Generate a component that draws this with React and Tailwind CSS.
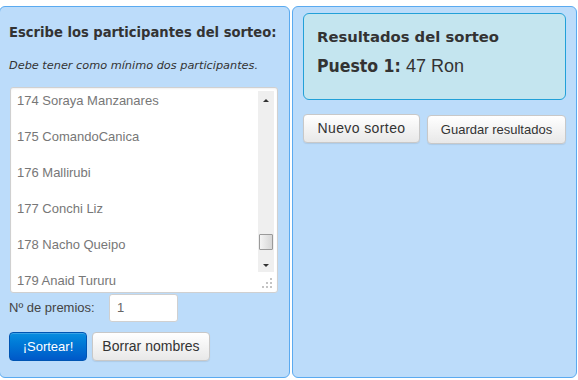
const participantes = [
  "174 Soraya Manzanares",
  "175 ComandoCanica",
  "176 Mallirubi",
  "177 Conchi Liz",
  "178 Nacho Queipo",
  "179 Anaid Tururu",
];

function Boton({ children, primary, ancho }) {
  return (
    <button
      className={
        (primary
          ? "h-[29px] rounded-[4px] border border-[#0055b3] bg-gradient-to-b from-[#0a8ee0] to-[#0058c8] text-[13px] text-white shadow-[inset_0_1px_0_rgba(255,255,255,0.2)] "
          : "h-[29px] rounded-[4px] border border-[#c8c8c8] bg-gradient-to-b from-white to-[#e8e8e8] text-[13px] text-[#333] shadow-[0_1px_1px_rgba(0,0,0,0.08)] ") +
        ancho
      }
    >
      {children}
    </button>
  );
}

function Scrollbar() {
  return (
    <div className="absolute right-[3px] top-[3px] flex h-[181px] w-[16px] flex-col items-center bg-[#efefef]">
      <div className="flex h-[18px] w-full items-center justify-center">
        <div className="h-0 w-0 border-x-[3px] border-b-[3px] border-x-transparent border-b-[#333]" />
      </div>
      <div className="flex-1" />
      <div className="mb-[8px] h-[16px] w-[14px] rounded-[1px] border border-[#9a9a9a] bg-gradient-to-r from-[#f4f4f4] to-[#d6d6d6]" />
      <div className="flex h-[14px] w-full items-center justify-center">
        <div className="h-0 w-0 border-x-[3px] border-t-[3px] border-x-transparent border-t-[#333]" />
      </div>
    </div>
  );
}

function Grip() {
  return (
    <div className="absolute bottom-[4px] right-[5px] grid grid-cols-3 gap-[2px]">
      {[0, 0, 1, 0, 1, 1, 1, 1, 1].map((v, i) => (
        <div key={i} className={v ? "h-[2px] w-[2px] bg-[#c4c4c4]" : "h-[2px] w-[2px]"} />
      ))}
    </div>
  );
}

export default function App() {
  return (
    <div className="flex h-[380px] w-[578px] gap-[2px] bg-white pt-[6px] font-['Liberation_Sans',Arial,sans-serif]">
      <div className="-ml-px flex h-[372px] w-[291px] flex-col rounded-[6px] border border-[#5aaaf0] bg-[#bcdcfa] px-[9px]">
        <h2 className="mt-[15px] whitespace-nowrap font-['DejaVu_Sans_Condensed','DejaVu_Sans',sans-serif] font-stretch-condensed text-[14.6px] font-bold leading-[20px] text-[#333]">
          Escribe los participantes del sorteo:
        </h2>
        <p className="mt-[17px] whitespace-nowrap font-['DejaVu_Sans',sans-serif] text-[11.3px] italic leading-[14px] text-[#333]">
          Debe tener como mínimo dos participantes.
        </p>
        <div className="relative ml-px mt-[14px] h-[206px] w-[268px] overflow-hidden rounded-[3px] border border-[#d0d0d0] bg-white shadow-[inset_0_1px_2px_rgba(0,0,0,0.06)]">
          <div className="pl-[6px] pt-[4px] text-[13px] leading-[18px] text-[#777]">
            {participantes.map((p) => (
              <div key={p} className="mb-[18px]">
                {p}
              </div>
            ))}
          </div>
          <Scrollbar />
          <Grip />
        </div>
        <div className="mt-[1px] flex items-center">
          <span className="w-[100px] text-[13px] text-[#444]">Nº de premios:</span>
          <div className="flex h-[28px] w-[69px] items-center rounded-[3px] border border-[#d0d0d0] bg-white pl-[7px] text-[13px] text-[#666]">
            1
          </div>
        </div>
        <div className="mt-[10px] flex gap-[5px]">
          <Boton primary ancho="w-[78px]">¡Sortear!</Boton>
          <Boton ancho="w-[118px] text-[14px]">Borrar nombres</Boton>
        </div>
      </div>

      <div className="flex h-[372px] w-[285px] flex-col rounded-[6px] border border-[#5aaaf0] bg-[#bcdcfa] px-[10px] pt-[6px]">
        <div className="h-[87px] rounded-[6px] border border-[#22a0d8] bg-[#c4e5ef] pl-[13px] pt-[13px] text-[#333]">
          <h2 className="font-['DejaVu_Sans',sans-serif] text-[14.8px] font-bold leading-[20px]">
            Resultados del sorteo
          </h2>
          <p className="mt-[8px] text-[18px] leading-[22px]">
            <span className="font-['DejaVu_Sans_Condensed','DejaVu_Sans',sans-serif] font-stretch-condensed text-[17.5px] font-bold">
              Puesto 1:
            </span>{" "}
            47 Ron
          </p>
        </div>
        <div className="mt-[14px] flex items-start gap-[7px]">
          <Boton ancho="w-[117px] text-[14px] tracking-[0.4px]">Nuevo sorteo</Boton>
          <Boton ancho="mt-[1px] w-[139px]">Guardar resultados</Boton>
        </div>
      </div>
    </div>
  );
}
